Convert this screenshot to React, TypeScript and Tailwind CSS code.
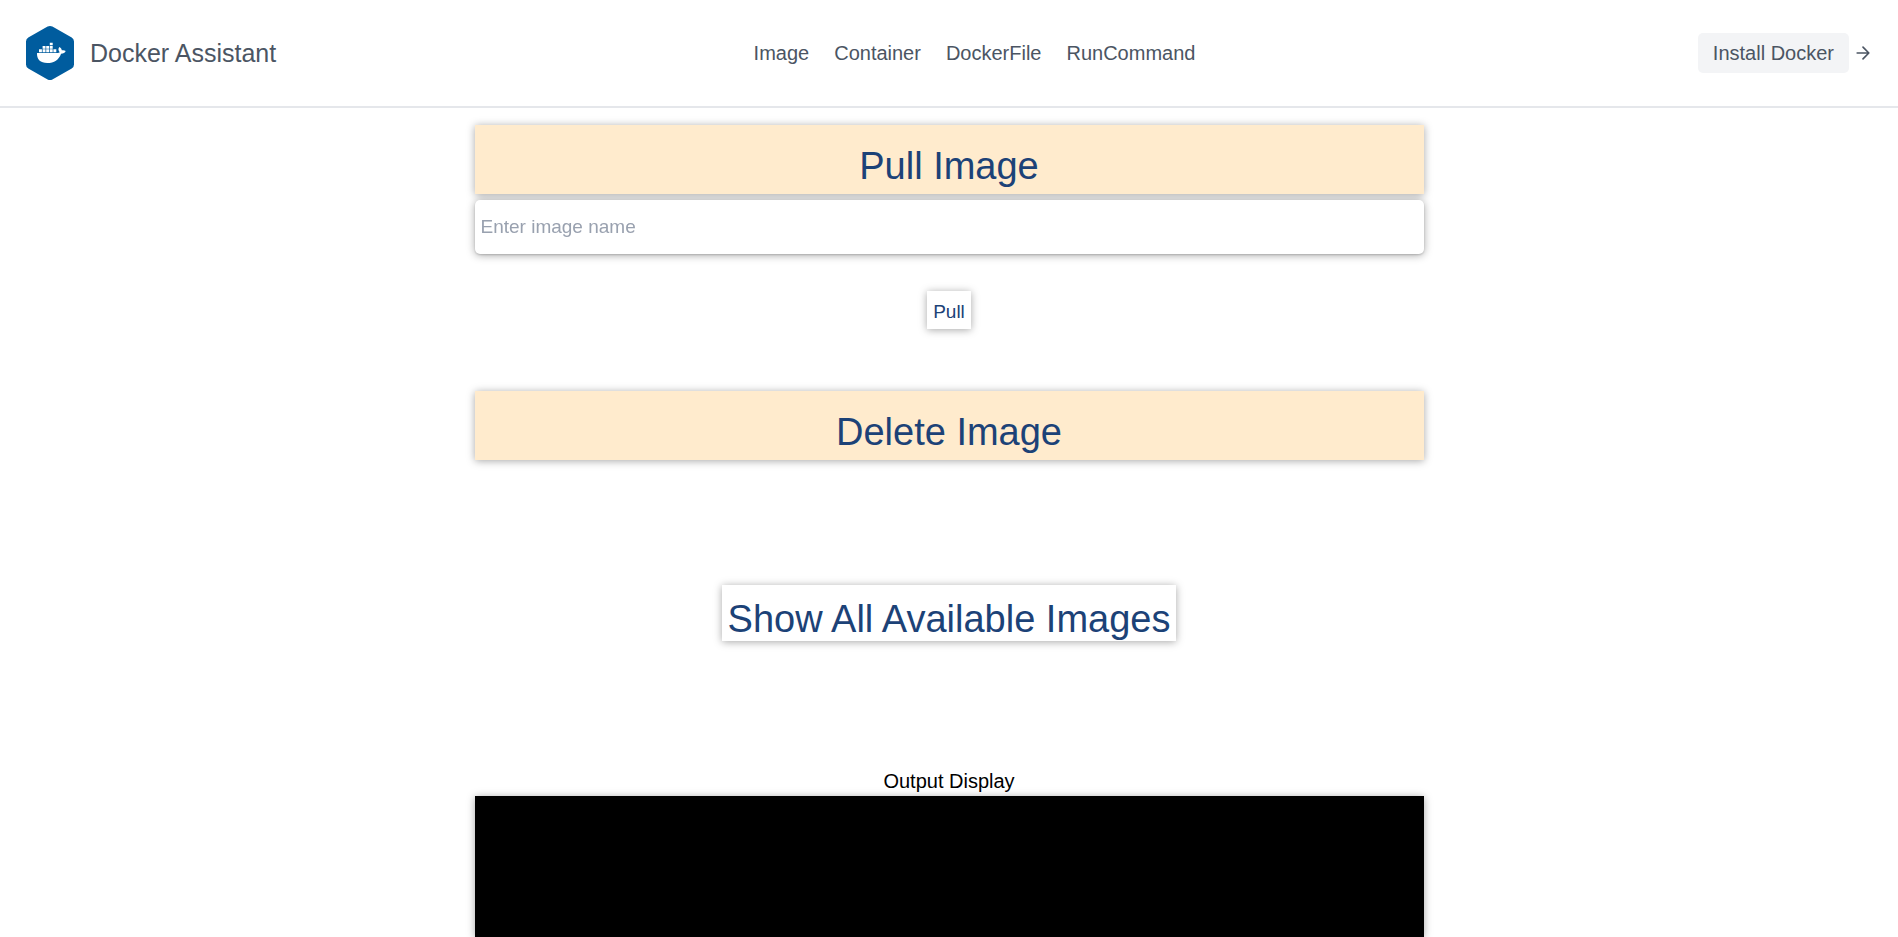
import { useState } from "react";

const links = ["Image", "Container", "DockerFile", "RunCommand"];
const panelShadow = "shadow-[0_1px_8px_rgba(0,0,0,0.35)]";

function Logo() {
  return (
    <svg viewBox="0 0 50 56" className="h-14 w-[50px]" aria-hidden="true">
      <path
        d="M22.6 1.6a5 5 0 0 1 4.8 0L46.7 12.4A4.6 4.6 0 0 1 49 16.4V39.6a4.6 4.6 0 0 1-2.3 4L27.4 54.4a5 5 0 0 1-4.8 0L3.3 43.6a4.6 4.6 0 0 1-2.300-4V16.400a4.600 4.600 0 0 1 2.300-4z"
        fill="#005c9e"
      />
      <g fill="#fff">
        <path d="M12 28h20.600c1 0 1.800-.3 2.200-.8-1.600-1.700-1.800-3.700-.4-5.300 1.600 1 2.300 2.100 2.400 3.400 1.600-.3 2.900-.1 3.900.7-.8 1.800-2.300 2.700-4.600 2.700C33.700 34.900 29.300 38 22.300 38 15.400 38 11.700 34.600 12 28z" />
        <path d="M14 24.300h2.900v2.900h-2.900zM17.600 24.300h2.900v2.900h-2.900zM21.200 24.300h2.900v2.900h-2.900zM24.800 24.300h2.900v2.900h-2.900zM28.400 24.300h2.900v2.900h-2.900zM17.600 20.900h2.900v2.800h-2.900zM21.200 20.900h2.900v2.800h-2.900zM24.800 20.900h2.900v2.800h-2.900zM24.800 17.800h2.900v2.500h-2.900z" />
      </g>
    </svg>
  );
}

function ArrowRight() {
  return (
    <svg
      viewBox="0 0 24 24"
      className="ml-1 size-5"
      fill="none"
      stroke="currentColor"
      strokeWidth="2"
      strokeLinecap="round"
      strokeLinejoin="round"
      aria-hidden="true"
    >
      <path d="M5 12h14M12 5l7 7-7 7" />
    </svg>
  );
}

function SectionTitle({ children }: { children: string }) {
  return (
    <h1 className="w-full bg-[#ffebcd] pt-[19px] pb-[5px] text-center text-[38px] leading-[45px] text-[#1c4277]">
      {children}
    </h1>
  );
}

export default function App() {
  const [name, setName] = useState("");

  return (
    <div className="min-h-screen bg-white font-['Liberation_Sans',Arial,sans-serif] text-[20px] leading-[30px] text-black">
      <header className="flex items-center border-b-2 border-gray-200 p-[25px] text-[#4b5563]">
        <a href="#" className="flex items-center gap-[15px] text-[25px] leading-[35px]">
          <Logo />
          <span>Docker Assistant</span>
        </a>
        <nav className="mx-auto flex">
          {links.map((link) => (
            <a key={link} href="#" className="mr-[25px] hover:text-gray-900">
              {link}
            </a>
          ))}
        </nav>
        <div className="flex items-center">
          <button className="rounded-[5px] bg-gray-100 px-[15px] py-[5px] hover:bg-gray-200">
            Install Docker
          </button>
          <ArrowRight />
        </div>
      </header>

      <main className="mx-auto flex w-1/2 flex-col items-center pt-[17px]">
        <div className="w-full drop-shadow-[0_1px_4px_rgba(0,0,0,0.35)]">
          <SectionTitle>Pull Image</SectionTitle>
          <input
            type="text"
            aria-label="Image name"
            placeholder="Enter image name"
            value={name}
            onChange={(event) => setName(event.target.value)}
            className="mt-1.5 block h-[54px] w-full rounded-[5px] bg-white px-1.5 text-[19px] placeholder:text-gray-400 shadow-[0_1px_2px_rgba(0,0,0,0.15)] outline-none"
          />
        </div>
        <button
          className={`mt-[37px] bg-white px-1.5 pt-1.5 pb-0.5 text-[19px] leading-[30px] text-[#1c4277] ${panelShadow}`}
        >
          Pull
        </button>

        <div className={`mt-[62px] w-full ${panelShadow}`}>
          <SectionTitle>Delete Image</SectionTitle>
        </div>

        <button
          className={`mt-[125px] bg-white px-1.5 pt-3 text-[38px] leading-[44px] text-[#1c4277] ${panelShadow}`}
        >
          Show All Available Images
        </button>

        <h2 className="mt-[125px]">Output Display</h2>
        <output aria-label="Output Display" className={`block h-[141px] w-full bg-black ${panelShadow}`} />
      </main>
    </div>
  );
}
